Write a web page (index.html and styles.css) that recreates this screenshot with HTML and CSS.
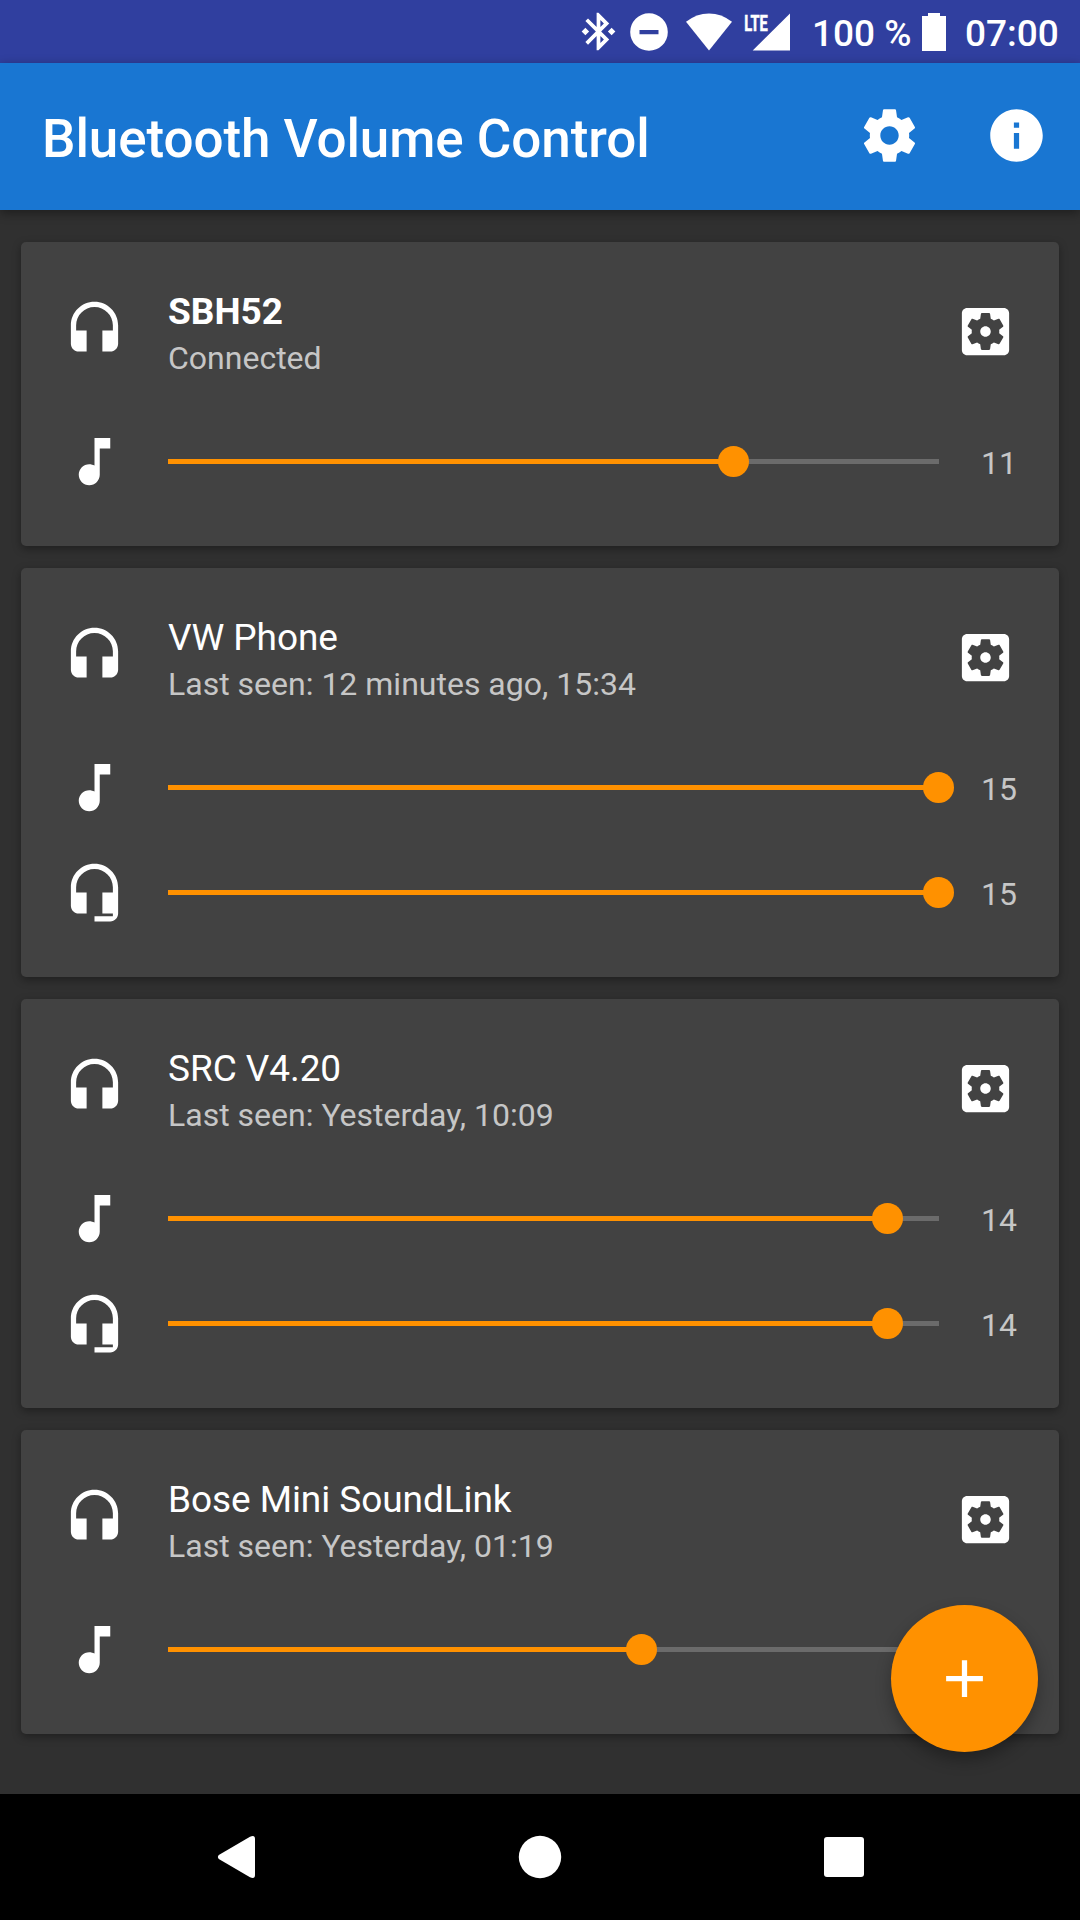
FILE: index.html
```html
<!DOCTYPE html>
<html lang="en">
<head>
<meta charset="utf-8">
<title>Bluetooth Volume Control</title>
<link rel="stylesheet" href="styles.css">
</head>
<body>
<svg class="sprite" aria-hidden="true">
  <symbol id="headset" viewBox="0 0 24 24"><path d="M12 1c-4.97 0-9 4.03-9 9v7c0 1.66 1.34 3 3 3h3v-8H5v-2c0-3.87 3.13-7 7-7s7 3.13 7 7v2h-4v8h3c1.66 0 3-1.34 3-3v-7c0-4.97-4.03-9-9-9z"/></symbol>
  <symbol id="mic" viewBox="0 0 24 24"><path d="M12 1c-4.97 0-9 4.03-9 9v7c0 1.66 1.34 3 3 3h3v-8H5v-2c0-3.87 3.13-7 7-7s7 3.13 7 7v2h-4v8h4v1h-7v2h6c1.66 0 3-1.34 3-3V10c0-4.97-4.03-9-9-9z"/></symbol>
  <symbol id="note" viewBox="0 0 24 24"><path d="M12 3v10.55c-.59-.34-1.27-.55-2-.55-2.21 0-4 1.79-4 4s1.79 4 4 4 4-1.79 4-4V7h4V3h-6z"/></symbol>
  <symbol id="device-settings" viewBox="0 0 24 24"><path d="M12 10c-1.1 0-2 .9-2 2s.9 2 2 2 2-.9 2-2-.9-2-2-2zm7-7H5c-1.11 0-2 .9-2 2v14c0 1.1.89 2 2 2h14c1.11 0 2-.9 2-2V5c0-1.1-.89-2-2-2zm-1.75 9c0 .23-.02.46-.05.68l1.48 1.16c.13.11.17.3.08.45l-1.4 2.42c-.09.15-.27.21-.43.15l-1.74-.7c-.36.28-.76.51-1.18.69l-.26 1.85c-.03.17-.18.3-.35.3h-2.8c-.17 0-.32-.13-.35-.29l-.26-1.85c-.43-.18-.82-.41-1.18-.69l-1.74.7c-.16.06-.34 0-.43-.15l-1.4-2.42c-.09-.15-.05-.34.08-.45l1.48-1.16c-.03-.23-.05-.46-.05-.69 0-.23.02-.46.05-.68l-1.48-1.16c-.13-.11-.17-.3-.08-.45l1.4-2.42c.09-.15.27-.21.43-.15l1.74.7c.36-.28.76-.51 1.18-.69l.26-1.85c.03-.17.18-.3.35-.3h2.8c.17 0 .32.13.35.29l.26 1.85c.43.18.82.41 1.18.69l1.74-.7c.16-.06.34 0 .43.15l1.4 2.42c.09.15.05.34-.08.45l-1.48 1.16c.03.23.05.46.05.69z"/></symbol>
</svg>

<div class="screen">
  <div class="status-bar">
    <svg class="st-bluetooth" viewBox="0 0 24 24"><path d="M7 12l-2-2-2 2 2 2 2-2zm10.71-4.29L12 2h-1v7.59L6.41 5 5 6.41 10.59 12 5 17.59 6.41 19 11 14.41V22h1l5.71-5.71-4.3-4.29 4.3-4.29zM13 5.83l1.88 1.88L13 9.59V5.83zm1.88 10.46L13 18.17v-3.76l1.88 1.88zM19 10l-2 2 2 2 2-2-2-2z"/></svg>
    <svg class="st-dnd" viewBox="0 0 38 38"><path fill-rule="evenodd" d="M19 .2a18.8 18.8 0 1 0 0 37.6a18.8 18.8 0 1 0 0-37.6zM9.5 17v4.2h19V17z"/></svg>
    <svg class="st-wifi" viewBox="0 0 46 38"><path d="M23 37.5L0 8.8Q10.5 .4 23 .4T46 8.8z"/></svg>
    <svg class="st-signal" viewBox="0 -8 46 54"><path d="M46 .5V37.5H8.7z"/><text class="lte" x="0.3" y="17.5" textLength="23.5" lengthAdjust="spacingAndGlyphs">LTE</text></svg>
    <span class="st-percent">100 %</span>
    <svg class="st-battery" viewBox="0 0 24 38"><path d="M6 0h12v3h6v35H0V3h6z"/></svg>
    <span class="st-time">07:00</span>
  </div>

  <header class="app-bar">
    <h1>Bluetooth Volume Control</h1>
    <svg class="icon" viewBox="0 0 24 24"><path d="M19.43 12.98c.04-.32.07-.64.07-.98s-.03-.66-.07-.98l2.11-1.65c.19-.15.24-.42.12-.64l-2-3.46c-.12-.22-.39-.3-.61-.22l-2.49 1c-.52-.4-1.08-.73-1.69-.98l-.38-2.65C14.46 2.18 14.25 2 14 2h-4c-.25 0-.46.18-.49.42l-.38 2.65c-.61.25-1.17.59-1.69.98l-2.49-1c-.23-.09-.49 0-.61.22l-2 3.46c-.13.22-.07.49.12.64l2.11 1.65c-.04.32-.07.65-.07.98s.03.66.07.98l-2.11 1.65c-.19.15-.24.42-.12.64l2 3.46c.12.22.39.3.61.22l2.49-1c.52.4 1.08.73 1.69.98l.38 2.65c.03.24.24.42.49.42h4c.25 0 .46-.18.49-.42l.38-2.65c.61-.25 1.17-.59 1.69-.98l2.49 1c.23.09.49 0 .61-.22l2-3.46c.12-.22.07-.49-.12-.64l-2.11-1.65zM12 15.5c-1.93 0-3.5-1.57-3.5-3.5s1.57-3.5 3.5-3.5 3.5 1.57 3.5 3.5-1.57 3.5-3.5 3.5z"/></svg>
    <svg class="icon" viewBox="0 0 24 24"><path d="M12 2C6.48 2 2 6.48 2 12s4.48 10 10 10 10-4.48 10-10S17.52 2 12 2zm1 15h-2v-6h2v6zm0-8h-2V7h2v2z"/></svg>
  </header>

  <main class="devices">
    <section class="card">
      <div class="device">
        <svg class="icon"><use href="#headset"/></svg>
        <div class="label"><h2 class="name connected">SBH52</h2><p class="seen">Connected</p></div>
        <svg class="icon config"><use href="#device-settings"/></svg>
      </div>
      <div class="volume"><svg class="icon"><use href="#note"/></svg><div class="slider"><div class="fill" style="width:73.33%"><i class="thumb"></i></div></div><span class="value">11</span></div>
    </section>

    <section class="card">
      <div class="device">
        <svg class="icon"><use href="#headset"/></svg>
        <div class="label"><h2 class="name">VW Phone</h2><p class="seen">Last seen: 12 minutes ago, 15:34</p></div>
        <svg class="icon config"><use href="#device-settings"/></svg>
      </div>
      <div class="volume"><svg class="icon"><use href="#note"/></svg><div class="slider"><div class="fill" style="width:99.93%"><i class="thumb"></i></div></div><span class="value">15</span></div>
      <div class="volume"><svg class="icon"><use href="#mic"/></svg><div class="slider"><div class="fill" style="width:99.93%"><i class="thumb"></i></div></div><span class="value">15</span></div>
    </section>

    <section class="card">
      <div class="device">
        <svg class="icon"><use href="#headset"/></svg>
        <div class="label"><h2 class="name">SRC V4.20</h2><p class="seen">Last seen: Yesterday, 10:09</p></div>
        <svg class="icon config"><use href="#device-settings"/></svg>
      </div>
      <div class="volume"><svg class="icon"><use href="#note"/></svg><div class="slider"><div class="fill" style="width:93.33%"><i class="thumb"></i></div></div><span class="value">14</span></div>
      <div class="volume"><svg class="icon"><use href="#mic"/></svg><div class="slider"><div class="fill" style="width:93.33%"><i class="thumb"></i></div></div><span class="value">14</span></div>
    </section>

    <section class="card">
      <div class="device">
        <svg class="icon"><use href="#headset"/></svg>
        <div class="label"><h2 class="name">Bose Mini SoundLink</h2><p class="seen">Last seen: Yesterday, 01:19</p></div>
        <svg class="icon config"><use href="#device-settings"/></svg>
      </div>
      <div class="volume"><svg class="icon"><use href="#note"/></svg><div class="slider"><div class="fill" style="width:61.41%"><i class="thumb"></i></div></div></div>
    </section>

    <button class="fab" aria-label="Add"><svg class="icon" viewBox="0 0 24 24"><path d="M19 13h-6v6h-2v-6H5v-2h6V5h2v6h6v2z"/></svg></button>
  </main>

  <nav class="nav-bar">
    <svg class="nav-icon" viewBox="0 0 44 44"><path d="M4.8 20L36 1.7Q41 -.5 41 4V40Q41 44.5 36 42.3L4.8 24Q3 22 4.8 20z"/></svg>
    <svg class="nav-icon" viewBox="0 0 44 44"><circle cx="22" cy="22" r="21.2"/></svg>
    <svg class="nav-icon" viewBox="0 0 44 44"><rect x="2" y="2" width="40" height="40" rx="3"/></svg>
  </nav>
</div>
</body>
</html>
```
FILE: styles.css
```css
* { box-sizing: border-box; }

body {
  margin: 0;
  background: #303030;
  color: #fff;
  font-family: Roboto, "Liberation Sans", sans-serif;
}

h1, h2, p { margin: 0; }
svg { display: block; flex: none; fill: #fff; }
.sprite { display: none; }
.icon { width: 63px; height: 63px; }

.screen {
  width: 1080px;
  height: 1920px;
  display: flex;
  flex-direction: column;
  overflow: hidden;
}

.status-bar {
  height: 63px;
  flex: none;
  display: flex;
  align-items: center;
  padding-left: 576px;
  background: #303f9f;
  font-size: 37px;
  font-weight: 500;
  line-height: 43px;
  white-space: nowrap;
}
.st-bluetooth { width: 45px; height: 45px; }
.st-dnd { width: 38px; height: 38px; margin-left: 9.3px; }
.st-wifi { width: 46px; height: 38px; margin-left: 17.7px; }
.st-signal { width: 46px; height: 54px; margin-left: 12px; overflow: visible; }
.lte { font-size: 22.5px; font-weight: 700; stroke: #fff; stroke-width: .6px; }
.st-percent { width: 98px; margin-left: 22px; padding-top: 3px; }
.st-battery { width: 24px; height: 38px; margin-left: 12px; }
.st-time { margin-left: 19px; padding-top: 3px; }

.app-bar {
  position: relative;
  height: 147px;
  flex: none;
  display: flex;
  align-items: center;
  padding: 0 32px 2px 42px;
  gap: 64px;
  background: #1976d2;
  box-shadow: 0 3px 10px rgba(0, 0, 0, .4);
}
.app-bar h1 {
  flex: 1;
  padding-top: 7px;
  font-size: 53px;
  font-weight: 500;
  letter-spacing: -.08px;
  line-height: 62px;
  white-space: nowrap;
}

.devices {
  position: relative;
  flex: 1;
  display: flex;
  flex-direction: column;
  gap: 22px;
  padding: 32px 21px 0;
}

.card {
  flex: none;
  padding: 0 42px 32px;
  border-radius: 5px;
  background: #424242;
  box-shadow: 0 3px 8px rgba(0, 0, 0, .35);
}

.device {
  height: 167px;
  display: grid;
  grid-template-columns: 105px 1fr 63px;
  align-items: start;
  padding-top: 57px;
}
.config { margin-top: 1px; }
.label { margin-top: -9px; white-space: nowrap; }
.name { font-size: 37px; font-weight: 400; letter-spacing: -.07px; line-height: 43px; }
.connected { font-weight: 700; letter-spacing: 0; }
.seen { margin-top: 6px; color: #c6c6c6; font-size: 32px; line-height: 38px; }

.volume {
  height: 105px;
  display: grid;
  grid-template-columns: 105px 771px 1fr;
  align-items: center;
}
.slider { height: 5px; background: #6b6b6b; }
.fill { position: relative; height: 100%; background: #ff9100; }
.thumb {
  position: absolute;
  top: -13px;
  right: -15.5px;
  width: 31px;
  height: 31px;
  border-radius: 50%;
  background: #ff9100;
}
.value { padding: 2px 0 0 42px; color: #c6c6c6; font-size: 32px; line-height: 38px; }

.fab {
  position: absolute;
  right: 42px;
  bottom: 42px;
  width: 147px;
  height: 147px;
  display: grid;
  place-items: center;
  padding: 0;
  border: 0;
  border-radius: 50%;
  background: #ff9100;
  box-shadow: 0 8px 16px rgba(0, 0, 0, .3);
}

.nav-bar {
  height: 126px;
  flex: none;
  display: flex;
  justify-content: center;
  align-items: center;
  gap: 260px;
  background: #000;
}
.nav-icon { width: 44px; height: 44px; }
```
